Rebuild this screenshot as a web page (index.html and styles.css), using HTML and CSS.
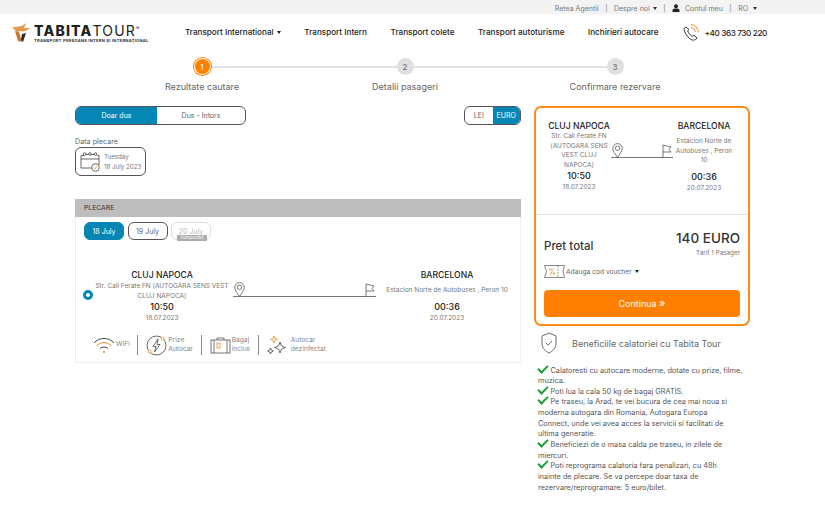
FILE: index.html
```html
<!DOCTYPE html>
<html lang="ro">
<head>
<meta charset="utf-8">
<title>Tabita Tour</title>
<link rel="stylesheet" href="styles.css">
</head>
<body>
<div class="topbar">
  <span>Retea Agentii</span><i class="sep">|</i>
  <span>Despre noi <b class="caret"></b></span><i class="sep">|</i>
  <span class="acct"><svg width="8" height="8" viewBox="0 0 8 8"><circle cx="4" cy="2.2" r="2" fill="#222"/><path d="M.5 8V6.4C.5 5 2 4.6 4 4.6s3.500.4 3.500 1.800V8z" fill="#222"/></svg> Contul meu</span><i class="sep">|</i>
  <span>RO <b class="caret caret-far"></b></span>
</div>
<header class="header">
  <div class="logo">
    <svg width="19" height="20" viewBox="0 0 19 20"><path d="M0 5 C3 3 7 4 10 3 L14 0 L12 5 L18 5 C15 8 11 9 8 8 L5 9 L3 7z" fill="#e09a4a"/><path d="M3 8 L7 9 L10 19 L6 18z" fill="#c9772a"/><path d="M10 11 L14 10 L11 19 L9 17z" fill="#2b2b2b"/></svg>
    <div class="logo-text">
      <div class="logo-name"><strong>TABITA</strong>TOUR<sup>®</sup></div>
      <div class="logo-sub">TRANSPORT PERSOANE INTERN ȘI INTERNAȚIONAL</div>
    </div>
  </div>
  <nav class="nav">
    <a>Transport International <b class="caret caret-dark"></b></a>
    <a>Transport Intern</a>
    <a>Transport colete</a>
    <a>Transport autoturisme</a>
    <a>Inchirieri autocare</a>
  </nav>
  <div class="phone">
    <svg width="16" height="17" viewBox="0 0 16 17" fill="none"><path d="M3 3 L1 4.500 C0.800 7 3 11 6 14 C8.500 16.500 11 16.500 12.500 15.500 L14 14 L11 11.200 L9.300 12.500 C7.500 11.500 5 8.500 4.700 6.700 L6 5.500z" stroke="#222" stroke-width=".9"/><path d="M8 0.500 C12 1 15 4 15.500 8.500 M8 3.500 C10.500 4 12 5.500 12.500 8" stroke="#f4a040" stroke-width="1.100"/></svg>
    <span>+40 363 730 220</span>
  </div>
</header>
<div class="stepper">
  <div class="step step-active"><div class="dot">1</div><div class="step-label">Rezultate cautare</div></div>
  <div class="step"><div class="dot">2</div><div class="step-label">Detalii pasageri</div></div>
  <div class="step"><div class="dot">3</div><div class="step-label">Confirmare rezervare</div></div>
</div>
<main class="main">
  <section class="left">
    <div class="toolbar">
      <div class="toggle trip"><span class="on">Doar dus</span><span>Dus - Intors</span></div>
      <div class="toggle cur"><span>LEI</span><span class="on">EURO</span></div>
    </div>
    <div class="date-label">Data plecare</div>
    <div class="date-box">
      <svg width="21" height="21" viewBox="0 0 21 21" fill="none" stroke="#444" stroke-width=".8"><path d="M4 4.500 H1 V17 H13 M19 14 V4.500 H17"/><path d="M1 8 H19"/><path d="M4 3.500H16"/><circle cx="4.500" cy="3" r="1.300" fill="#fff"/><circle cx="10" cy="3" r="1.300" fill="#fff"/><circle cx="15.500" cy="3" r="1.300" fill="#fff"/><circle cx="15.500" cy="16.500" r="3.800" fill="#fff"/><path d="M13.700 16.500l1.300 1.300 2.200-2.600" stroke="#f08a1c"/></svg>
      <div><div>Tuesday</div><div>18 July 2023</div></div>
    </div>
    <div class="panel">
      <div class="panel-head">PLECARE</div>
      <div class="pills">
        <span class="pill pill-on">18 July</span>
        <span class="pill">19 July</span>
        <span class="pill pill-off">20 July<em class="badge">Indisponibil</em></span>
      </div>
      <div class="trip-row">
        <span class="radio"></span>
        <div class="stop stop-from">
          <div class="city">CLUJ NAPOCA</div>
          <div class="addr">Str. Cali Ferate FN (AUTOGARA SENS VEST CLUJ NAPOCA)</div>
          <div class="time">10:50</div>
          <div class="day">18.07.2023</div>
        </div>
        <div class="route">
          <svg class="pin" width="11" height="15" viewBox="0 0 11 15" fill="none" stroke="#555" stroke-width=".8"><path d="M5.500 14.500 C3 10.500 .8 8 .8 5.300 A4.700 4.700 0 0 1 10.200 5.300 C10.200 8 8 10.500 5.500 14.500z"/><circle cx="5.500" cy="5.300" r="2.200"/></svg>
          <svg class="flag" width="10" height="14" viewBox="0 0 10 14" fill="none" stroke="#555" stroke-width=".8"><path d="M1 14V1 L9 3 L7 5.500 L9 8 H1"/></svg>
        </div>
        <div class="stop stop-to">
          <div class="city">BARCELONA</div>
          <div class="addr">Estacion Norte de Autobuses , Peron 10</div>
          <div class="time">00:36</div>
          <div class="day">20.07.2023</div>
        </div>
      </div>
      <div class="features">
        <div class="feat"><svg width="22" height="17" viewBox="0 0 22 17" fill="none" stroke-width="1"><path d="M1 6 C6 0 16 0 21 6" stroke="#444"/><path d="M3.500 9 C7.500 4.500 14.500 4.500 18.500 9" stroke="#f08a1c"/><path d="M7 11.500 C9.500 9.500 12.500 9.500 15 11.500" stroke="#444"/><circle cx="11" cy="15" r="1" fill="#f08a1c"/></svg><span>WiFi</span></div>
        <div class="feat"><svg width="21" height="21" viewBox="0 0 21 21" fill="none" stroke="#444" stroke-width=".8"><circle cx="10.500" cy="10.500" r="9.500"/><path d="M12 4 L7 11.500 H10 L8.500 17 L14 9.500 H11z"/><circle cx="3.500" cy="16.500" r="1.500" fill="#fff" stroke="#f08a1c"/><circle cx="16.500" cy="3.500" r="1.500" fill="#fff" stroke="#f08a1c"/></svg><span>Prize<br>Autocar</span></div>
        <div class="feat"><svg width="21" height="17" viewBox="0 0 21 17" fill="none" stroke="#555" stroke-width=".8"><rect x="1" y="3" width="19" height="13"/><path d="M7 3V1H14V3M4 3V16M17 3V16"/><rect x="7" y="6" width="3" height="5" stroke="#f08a1c"/></svg><span>Bagaj<br>inclus</span></div>
        <div class="feat feat-last"><svg width="21" height="20" viewBox="0 0 21 20" fill="none" stroke="#444" stroke-width=".8"><path d="M13 7 L14.500 11 L18.500 12.500 L14.500 14 L13 18 L11.500 14 L7.500 12.500 L11.500 11z"/><path d="M7 1 L8 3.500 L10.500 4.500 L8 5.500 L7 8 L6 5.500 L3.500 4.500 L6 3.500z" stroke="#f08a1c"/><path d="M3.500 13 L4.300 15 L6.300 16 L4.300 17 L3.500 19 L2.700 17 L.7 16 L2.700 15z"/></svg><span>Autocar<br>dezinfectat</span></div>
      </div>
    </div>
  </section>
  <aside class="right">
    <div class="summary">
      <div class="sum-route">
        <div class="sum-stop sum-from">
          <div class="city">CLUJ NAPOCA</div>
          <div class="addr">Str. Cali Ferate FN (AUTOGARA SENS VEST CLUJ NAPOCA)</div>
          <div class="time">10:50</div>
          <div class="day">18.07.2023</div>
        </div>
        <div class="route route-sm">
          <svg class="pin" width="11" height="15" viewBox="0 0 11 15" fill="none" stroke="#555" stroke-width=".8"><path d="M5.500 14.500 C3 10.500 .8 8 .8 5.300 A4.700 4.700 0 0 1 10.200 5.300 C10.200 8 8 10.500 5.500 14.500z"/><circle cx="5.500" cy="5.300" r="2.200"/></svg>
          <svg class="flag" width="10" height="14" viewBox="0 0 10 14" fill="none" stroke="#555" stroke-width=".8"><path d="M1 14V1 L9 3 L7 5.500 L9 8 H1"/></svg>
        </div>
        <div class="sum-stop sum-to">
          <div class="city">BARCELONA</div>
          <div class="addr">Estacion Norte de Autobuses , Peron 10</div>
          <div class="time">00:36</div>
          <div class="day">20.07.2023</div>
        </div>
      </div>
      <div class="sum-bottom">
        <div class="price-row">
          <div class="price-label">Pret total</div>
          <div class="price-val"><div class="price">140 EURO</div><div class="tarif">Tarif 1 Pasager</div></div>
        </div>
        <div class="voucher">
          <svg width="21" height="13" viewBox="0 0 21 13" fill="none" stroke="#555" stroke-width=".7"><path d="M0.500 .5H20.500L19 6.500L20.500 12.500H.5L2.500 6.500z"/><path d="M14 1V12" stroke-dasharray="1.500 1.500"/><path d="M6 10L10 3" stroke="#f08a1c"/><circle cx="6.500" cy="4.500" r="1" stroke="#f08a1c"/><circle cx="10" cy="8.500" r="1" stroke="#f08a1c"/></svg>
          <span>Adauga cod voucher <b class="caret caret-dark"></b></span>
        </div>
        <div class="cta">Continua <span class="cta-arrow">»</span></div>
      </div>
    </div>
    <div class="benefits-head">
      <svg width="16" height="22" viewBox="0 0 16 22" fill="none" stroke="#444" stroke-width=".8"><path d="M8 1 L15 4 V12 C15 16 11 19.500 8 21 C5 19.500 1 16 1 12 V4z"/><path d="M5 11l2.200 2.200L11 9"/></svg>
      <span>Beneficiile calatoriei cu Tabita Tour</span>
    </div>
    <ul class="benefits">
      <li>Calatoresti cu autocare moderne, dotate cu prize, filme, muzica.</li>
      <li>Poti lua la cala 50 kg de bagaj GRATIS.</li>
      <li>Pe traseu, la Arad, te vei bucura de cea mai noua si moderna autogara din Romania, Autogara Europa<br>Connect, unde vei avea acces la servicii si facilitati de<br>ultima generatie.</li>
      <li>Beneficiezi de o masa calda pe traseu, in zilele de miercuri.</li>
      <li>Poti reprograma calatoria fara penalizari, cu 48h<br>inainte de plecare. Se va percepe doar taxa de rezervare/reprogramare: 5 euro/bilet.</li>
    </ul>
  </aside>
</main>
</body>
</html>
```
FILE: styles.css
```css
* { box-sizing: border-box; }
html, body { margin: 0; padding: 0; }
body {
  width: 825px;
  height: 525px;
  overflow: hidden;
  background: #fff;
  color: #555;
  font-family: "Inter", "Open Sans", sans-serif;
  font-size: 7px;
}
.topbar {
  height: 14px;
  background: #f3f3f3;
  display: flex;
  justify-content: flex-end;
  align-items: center;
  padding: 3px 68px 0 0;
  color: #777;
  font-size: 7px;
  white-space: nowrap;
}
.sep { font-style: normal; margin: 0 6.500px; }
.acct svg { margin-right: 3px; vertical-align: -1px; }
.caret {
  display: inline-block;
  width: 0;
  height: 0;
  border-left: 2.500px solid transparent;
  border-right: 2.500px solid transparent;
  border-top: 3px solid #333;
  vertical-align: 1px;
  margin-left: 1px;
}
.caret-far { margin-left: 3px; }
.caret-dark { border-top-color: #222; }

.header {
  height: 36px;
  display: flex;
  align-items: center;
  padding-left: 12px;
}
.logo { display: flex; align-items: center; width: 173px; margin-top: 1px; }
.logo-text { margin-left: 3px; }
.logo-name { font-size: 14px; line-height: 15px; color: #222; font-weight: 400; letter-spacing: 1.200px; white-space: nowrap; }
.logo-name strong { font-weight: 800; }
.logo-name sup { font-size: 5px; line-height: 0; vertical-align: 6px; }
.logo-sub { font-size: 4.100px; letter-spacing: .25px; line-height: 5px; font-weight: 700; color: #333; white-space: nowrap; }
.nav { display: flex; gap: 23.600px; color: #222; font-size: 8.150px; font-weight: 500; white-space: nowrap; margin-top: -1px; }
.phone { display: flex; align-items: center; gap: 6px; margin-left: 24px; color: #222; font-size: 8.200px; font-weight: 500; letter-spacing: -.4px; white-space: nowrap; margin-top: 1px; }

.stepper {
  display: grid;
  grid-template-columns: 200px 206px 214px;
  justify-content: start;
  padding: 8px 0 0 102px;
  height: 44px;
}
.step {
  position: relative;
  display: flex;
  flex-direction: column;
  align-items: center;
  font-size: 9px;
  color: #666;
  white-space: nowrap;
}
.step + .step::before {
  content: "";
  position: absolute;
  top: 8px;
  right: 50%;
  width: 100%;
  height: 1.500px;
  background: #e2e2e2;
}
.dot {
  position: relative;
  z-index: 1;
  width: 17px;
  height: 17px;
  border-radius: 50%;
  background: #e0e0e0;
  color: #666;
  font-size: 8px;
  display: flex;
  align-items: center;
  justify-content: center;
}
.step-active .dot {
  background: #ff8000;
  color: #fff;
  box-shadow: inset 0 0 0 1px #fff, 0 0 0 1px #ff8000;
}
.step-label { margin-top: 6px; line-height: 12px; }

.main {
  display: flex;
  gap: 13px;
  padding: 12px 0 0 75px;
}
.left { width: 446px; }
.right { width: 216px; }

.toolbar { display: flex; justify-content: space-between; height: 19px; }
.toggle {
  display: flex;
  border: 1px solid #555;
  border-radius: 6px;
  overflow: hidden;
  font-size: 7px;
  color: #666;
}
.toggle span { display: flex; align-items: center; justify-content: center; }
.toggle .on { background: #0686b4; color: #fff; }
.trip { width: 171px; }
.trip span:first-child { width: 81px; }
.trip span:last-child { flex: 1; }
.cur { width: 57px; }
.cur span { flex: 1; }

.date-label { margin-top: 12px; font-size: 7.200px; line-height: 9px; color: #666; }
.date-box {
  display: flex;
  align-items: center;
  gap: 3px;
  width: 71px;
  height: 29px;
  margin-top: 1px;
  padding-left: 4px;
  border: 1px solid #555;
  border-radius: 6px;
  font-size: 6.200px;
  line-height: 10px;
  color: #777;
  white-space: nowrap;
}
.panel {
  margin-top: 23px;
  height: 164px;
  border: 1px solid #eee;
  border-top: 0;
  border-radius: 0 0 3px 3px;
}
.panel-head {
  height: 18px;
  margin: 0 -1px;
  padding-left: 9px;
  background: #bdbdbd;
  color: #333;
  font-size: 6.800px;
  line-height: 18px;
}
.pills { display: flex; gap: 3.500px; padding: 5px 0 0 8px; }
.pill {
  position: relative;
  width: 40px;
  height: 18px;
  border: 1px solid #555;
  border-radius: 6px;
  display: flex;
  align-items: center;
  justify-content: center;
  font-size: 7px;
  color: #666;
}
.pill-on { background: #0686b4; border-color: #0686b4; color: #fff; }
.pill-off { border-color: #ddd; color: #bbb; }
.badge {
  position: absolute;
  left: 5px;
  top: 12px;
  width: 30px;
  height: 6px;
  background: #aaa;
  color: #fff;
  font-style: normal;
  font-size: 4.300px;
  line-height: 6px;
  text-align: center;
  border-radius: 1px;
}
.trip-row { display: flex; align-items: flex-start; height: 57px; margin-top: 30px; }
.radio {
  width: 10px;
  height: 10px;
  margin: 20px 0 0 7px;
  border-radius: 50%;
  border: 3px solid #0686b4;
  background: #fff;
  flex: none;
}
.stop { text-align: center; }
.stop-from { width: 136px; margin-left: 1px; }
.stop-to { width: 126px; margin-left: 8px; }
.city { font-size: 8.600px; font-weight: 500; color: #222; line-height: 11px; white-space: nowrap; }
.addr { font-size: 6.500px; color: #777; line-height: 10px; }
.stop-to .addr { margin-top: 4px; }
.time { font-size: 9px; font-weight: 500; color: #222; line-height: 12px; }
.stop-to .time { margin-top: 6px; }
.day { font-size: 6.500px; color: #777; line-height: 10px; }

.route {
  position: relative;
  width: 143px;
  height: 27px;
  margin-left: 3px;
  border-bottom: 1px solid #777;
  flex: none;
}
.pin { position: absolute; left: 1px; bottom: -1px; }
.flag { position: absolute; right: 1px; bottom: -1px; }
.route-sm { width: 62px; height: 26px; margin: 11px 0 0 -3px; }

.features { display: flex; padding-left: 17px; margin-top: 8px; }
.feat {
  display: flex;
  align-items: center;
  gap: 1px;
  height: 20px;
  padding-right: 7.500px;
  margin-right: 8px;
  border-right: 1px solid #888;
  font-size: 6.700px;
  line-height: 9.500px;
  color: #888;
  white-space: nowrap;
}
.feat-last { border-right: 0; gap: 3px; }

.summary {
  height: 220px;
  border: 2px solid #ff8c1a;
  border-radius: 7px;
  display: flex;
  flex-direction: column;
}
.sum-route { display: flex; height: 107px; border-bottom: 1px solid #e3e3e3; padding-top: 13px; }
.sum-stop { text-align: center; flex: none; }
.sum-from { width: 70px; margin-left: 8px; }
.sum-to { width: 62px; }
.sum-from .addr { padding: 0 6px; line-height: 9.600px; }
.sum-to .addr { line-height: 9.600px; margin-top: 5px; }
.sum-to .time { margin-top: 5px; }
.sum-bottom { padding: 15px 8px 0 8px; }
.price-row { display: flex; justify-content: space-between; align-items: flex-start; }
.price-label { font-size: 11.500px; font-weight: 500; color: #333; margin-top: 9px; line-height: 14px; }
.price-val { text-align: right; }
.price { font-size: 13.500px; font-weight: 500; color: #333; line-height: 16px; }
.tarif { font-size: 6.300px; color: #777; line-height: 10px; margin-top: 2px; }
.voucher { display: flex; align-items: center; gap: 1px; margin-top: 7px; font-size: 6.700px; color: #666; white-space: nowrap; }
.cta {
  margin-top: 12px;
  height: 27px;
  padding-top: 1px;
  background: #ff8000;
  border-radius: 4px;
  color: #fff;
  font-size: 9px;
  line-height: 26px;
  text-align: center;
}
.cta-arrow { font-size: 11px; line-height: 0; }
.benefits-head { display: flex; align-items: center; gap: 15px; margin: 6px 0 0 7px; height: 22px; font-size: 9px; color: #666; white-space: nowrap; }
.benefits { list-style: none; margin: 11.500px 0 0 0; padding: 0 0 0 4px; font-size: 7.300px; line-height: 10.650px; color: #555; }
.benefits li::before {
  content: "";
  display: inline-block;
  width: 8px;
  height: 4px;
  border-left: 2.500px solid #1f9d3a;
  border-bottom: 2.500px solid #1f9d3a;
  transform: translateY(-2px) rotate(-45deg);
  margin-right: 2.500px;
  vertical-align: baseline;
}
```
